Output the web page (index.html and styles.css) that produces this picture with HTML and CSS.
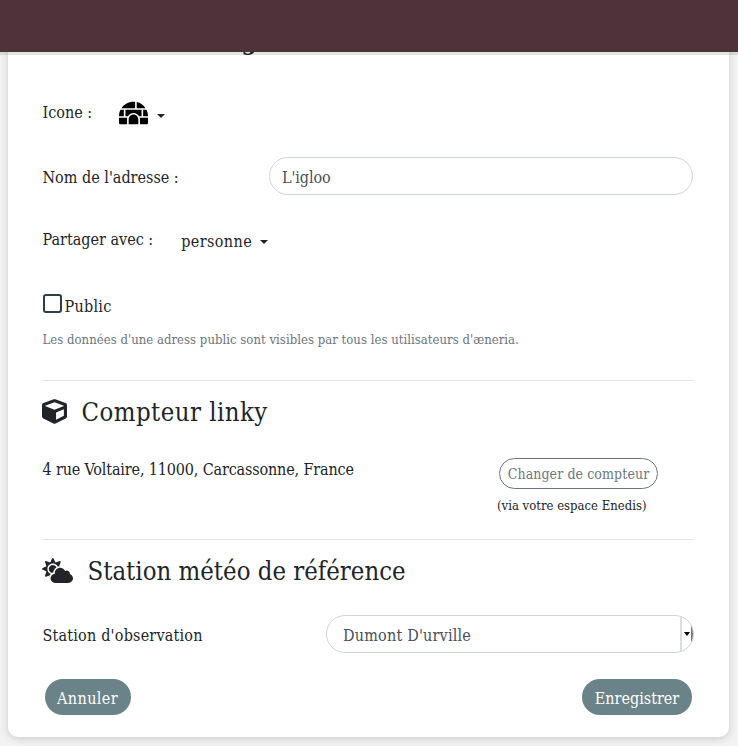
FILE: index.html
```html
<!DOCTYPE html>
<html lang="fr">
<head>
<meta charset="utf-8">
<title>Adresse</title>
<link rel="stylesheet" href="styles.css">
</head>
<body>
<header class="topbar"></header>
<main class="card">
  <h1 class="page-title">g</h1>
  <div class="row row-icon">
    <span class="label t-icone">Icone :</span>
    <button class="dropdown icon-dropdown">
      <svg class="igloo" viewBox="0 0 576 512"><path d="M320 33.9c-10.5-1.2-21.2-1.9-32-1.9-99.8 0-187.8 50.8-239.4 128H320V33.9zM96 192H30.3C11.1 230.6 0 274 0 320h96V192zM352 39.4V160h175.4C487.2 99.9 424.8 55.9 352 39.4zM480 320h96c0-46-11.1-89.4-30.3-128H480v128zm-64 64v96h128c17.7 0 32-14.3 32-32v-96H411.5c2.6 10.3 4.5 20.9 4.5 32zm32-192H128v128h49.8c22.2-38.1 63-64 110.2-64s88 25.9 110.2 64H448V192zM0 448c0 17.7 14.3 32 32 32h128v-96c0-11.1 1.9-21.7 4.5-32H0v96zm288-160c-53 0-96 43-96 96v96h192v-96c0-53-43-96-96-96z"/></svg>
      <i class="caret"></i>
    </button>
  </div>
  <div class="row row-name">
    <label class="label t-nom" for="name">Nom de l'adresse :</label>
    <input class="field name-field" id="name" value="L'igloo">
  </div>
  <div class="row row-share">
    <span class="label t-partager">Partager avec :</span>
    <button class="dropdown share-dropdown"><span class="t-personne">personne</span><i class="caret"></i></button>
  </div>
  <div class="row row-public">
    <span class="checkbox"></span><span class="t-public">Public</span>
  </div>
  <p class="hint">Les données d'une adress public sont visibles par tous les utilisateurs d'æneria.</p>
  <section class="section meter">
    <h2 class="section-title">
      <svg class="cube" viewBox="0 0 512 512"><path d="M239.1 6.3l-208 78c-18.7 7-31.1 25-31.1 45v225.1c0 18.2 10.3 34.8 26.5 42.9l208 104c13.5 6.8 29.4 6.8 42.9 0l208-104c16.3-8.1 26.5-24.8 26.5-42.9V129.3c0-20-12.4-37.9-31.1-44.9l-208-78C262 2.2 250 2.2 239.1 6.3zM256 68.4l192 72v1.1l-192 78-192-78v-1.1l192-72zm32 356V275.5l160-65v133.9l-160 80z"/></svg>
      <span class="t-compteur">Compteur linky</span>
    </h2>
    <div class="meter-body">
      <span class="address">4 rue Voltaire, 11000, Carcassonne, France</span>
      <div class="meter-action">
        <button class="outline-button"><span class="t-changer">Changer de compteur</span></button>
        <small class="via">(via votre espace Enedis)</small>
      </div>
    </div>
  </section>
  <section class="section station">
    <h2 class="section-title">
      <svg class="cloud-sun" viewBox="0 0 640 512"><path d="M575.2 325.7c.2-1.9.8-3.7.8-5.6 0-35.3-28.7-64-64-64-12.6 0-24.2 3.8-34.1 10-17.6-38.8-56.5-66-101.9-66-61.8 0-112 50.1-112 112 0 3 .7 5.8.9 8.7-49.6 3.7-88.9 44.7-88.9 95.3 0 53 43 96 96 96h272c53 0 96-43 96-96 0-42.1-27.2-77.4-64.8-90.4zm-430.4-22.6c-43.7-43.7-43.7-114.7 0-158.3 43.7-43.7 114.7-43.7 158.4 0 9.7 9.7 16.9 20.9 22.3 32.7 9.8-3.7 20.1-6 30.7-7.5L386 81.1c4-11.9-7.3-23.1-19.2-19.2L279 91.2 237.5 8.4C232-2.8 216-2.8 210.4 8.4L169 91.2 81.1 61.9C69.3 58 58 69.3 61.9 81.1l29.3 87.8-82.8 41.5c-11.2 5.6-11.2 21.5 0 27.1l82.8 41.4-29.3 87.8c-4 11.9 7.3 23.1 19.2 19.2l76.1-25.3c6.1-12.4 14-23.7 23.6-33.5-13.1-5.4-25.4-13.4-36-24zm-4.8-79.2c0 40.8 29.3 74.8 67.9 82.3 8-4.7 16.3-8.8 25.2-11.7 5.4-44.3 31-82.5 67.4-105C287.3 160.4 258 140 224 140c-46.3 0-84 37.6-84 83.9z"/></svg>
      <span class="t-station">Station météo de référence</span>
    </h2>
    <div class="row row-station">
      <span class="label t-observation">Station d'observation</span>
      <div class="field select"><span class="t-dumont">Dumont D'urville</span><span class="select-arrow"><i class="caret small"></i></span></div>
    </div>
  </section>
  <footer class="actions">
    <button class="button"><span class="t-annuler">Annuler</span></button>
    <button class="button"><span class="t-enregistrer">Enregistrer</span></button>
  </footer>
</main>
</body>
</html>
```
FILE: styles.css
```css
* { box-sizing: border-box; }
body {
  margin: 0;
  height: 746px;
  overflow: hidden;
  background: #f3f3f3;
  color: #212529;
  font: 16px/24px "Roboto Slab", "DejaVu Serif Condensed", "DejaVu Serif", serif;
  font-stretch: condensed;
}
button, input { font: inherit; color: inherit; font-stretch: condensed; }
span, small, p { white-space: nowrap; }
.topbar {
  position: absolute;
  top: 0;
  left: 0;
  width: 100%;
  height: 52px;
  background: #50323b;
  box-shadow: 0 3px 0 rgba(0, 0, 0, .1);
  z-index: 2;
}
.card {
  width: 721px;
  height: 737px;
  margin-left: 8px;
  padding: 24px 35px 0 34.5px;
  background: #fff;
  border-radius: 0 0 10px 10px;
  box-shadow: 0 2px 8px rgba(0, 0, 0, .16);
}
.page-title { margin: 0 0 0 199px; height: 69px; font-size: 24px; line-height: 35px; }
.row { display: flex; align-items: center; }
.row-icon { height: 40px; }
.t-icone { margin-top: -1px; }
.icon-dropdown { margin-left: 26.5px; }
.dropdown { display: flex; align-items: center; padding: 0; border: 0; background: none; }
.igloo { width: 29px; height: 26px; fill: #000; }
.caret { width: 0; height: 0; border: 4.5px solid transparent; border-top-color: #212529; border-bottom: 0; margin-left: 8px; }
.icon-dropdown .caret { margin: 6px 0 0 9px; }
.row-name { height: 38px; margin-top: 24px; justify-content: space-between; }
.field { height: 38px; margin-right: 1px; border: 1px solid #ced4da; border-radius: 19px; background: #fff; color: #495057; }
.name-field { width: 424px; padding: 2px 12px 0; letter-spacing: -.1px; }
.row-name .label { padding-top: 3px; }
.row-share { height: 40px; margin-top: 24px; }
.t-partager { padding-top: 2px; }
.share-dropdown { margin: 6px 0 0 28px; }
.t-personne { letter-spacing: .4px; }
.row-public { height: 24px; margin-top: 35px; }
.t-public { padding-top: 2px; letter-spacing: .25px; }
.checkbox { width: 19px; height: 19px; margin: -6px 3px 0 0; border: 2px solid #2c3e46; border-radius: 3px; }
.hint { margin: 12px 0 0; height: 20px; line-height: 20px; font-size: 13px; letter-spacing: .03px; color: #6c757d; }
.section { border-top: 1px solid #e3e3e4; }
.meter { margin-top: 30px; height: 159px; }
.section-title { display: flex; align-items: center; height: 32px; margin: 15px 0 0; font-size: 25.5px; line-height: 32px; font-weight: 400; }
.section-title svg { fill: #212529; margin-left: -.5px; margin-top: -1px; }
.t-compteur { letter-spacing: .45px; }
.cube { width: 25px; height: 25px; margin-right: 14.5px; }
.cloud-sun { width: 31px; height: 25px; margin-right: 14.5px; }
.meter-body { display: flex; justify-content: space-between; margin-top: 30px; }
.address { line-height: 24px; letter-spacing: -.15px; }
.meter-action { width: 197px; }
.outline-button { display: flex; align-items: center; justify-content: center; width: 159px; height: 31px; margin-left: 2px; padding: 1px 0 0; border: 1px solid #6c757d; border-radius: 16px; background: #fff; color: #6c757d; font-size: 14px; letter-spacing: .1px; }
.via { display: block; margin-top: 7px; line-height: 20px; font-size: 13px; }
.row-station { justify-content: space-between; height: 38px; margin-top: 28px; }
.row-station .label { padding-top: 3px; letter-spacing: .2px; }
.select { display: flex; align-items: center; justify-content: space-between; width: 368px; margin-right: 0; padding-left: 16px; overflow: hidden; }
.t-dumont { padding-top: 3px; letter-spacing: .2px; }
.select-arrow { display: flex; align-items: center; justify-content: center; width: 13px; height: 36px; border-left: 2px solid #ddd; border-right: 2px solid #777; }
.caret.small { margin: 0; border-width: 4px 3.5px 0; border-top-color: #000; }
.actions { display: flex; justify-content: space-between; margin: 26px 2px 0; }
.button { display: flex; align-items: center; justify-content: center; width: 86px; height: 36px; padding: 3px 0 0; border: 0; border-radius: 18px; background: #6a8388; color: #fff; }
.t-annuler { letter-spacing: .4px; }
.button:last-child { width: 110px; }
```
